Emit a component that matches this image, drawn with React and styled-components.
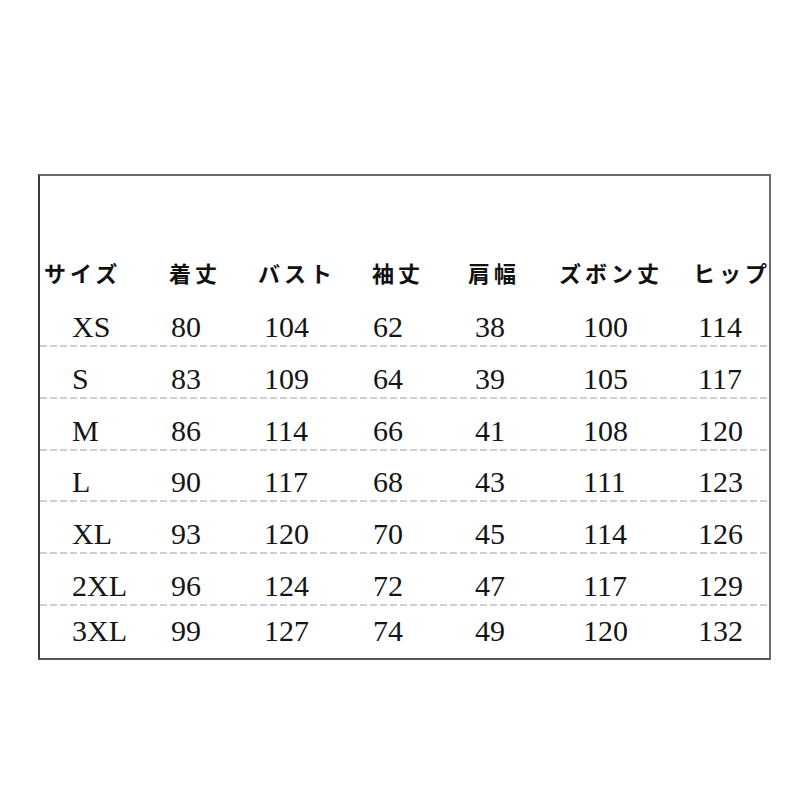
import React from "react";
import styled, { createGlobalStyle } from "styled-components";

const Global = createGlobalStyle`
  html, body { margin: 0; padding: 0; background: #fff; }
  body { width: 800px; height: 800px; overflow: hidden; }
`;

const columns = [
  { key: "size", head: "サイズ", indent: 28 },
  { key: "length", head: "着丈", indent: 2 },
  { key: "bust", head: "バスト", indent: 6 },
  { key: "sleeve", head: "袖丈", indent: 1 },
  { key: "shoulder", head: "肩幅", indent: 7 },
  { key: "pants", head: "ズボン丈", indent: 24 },
  { key: "hip", head: "ヒップ", indent: 5 },
];

const rows = [
  ["XS", 80, 104, 62, 38, 100, 114],
  ["S", 83, 109, 64, 39, 105, 117],
  ["M", 86, 114, 66, 41, 108, 120],
  ["L", 90, 117, 68, 43, 111, 123],
  ["XL", 93, 120, 70, 45, 114, 126],
  ["2XL", 96, 124, 72, 47, 117, 129],
  ["3XL", 99, 127, 74, 49, 120, 132],
];

const Page = styled.div`
  padding: 174px 0 0 38px;
`;

const Chart = styled.div`
  width: 733px;
  height: 486px;
  box-sizing: border-box;
  border: 2px solid #6a6a6a;
  border-left-color: #3a3a3a;
  border-bottom-color: #555;
  display: flex;
  flex-direction: column;
  padding-top: 85px;
`;

const gridCols = "125px 89px 114px 96px 91px 134px 1fr";

const HeaderRow = styled.div`
  display: grid;
  grid-template-columns: ${gridCols};
  padding-left: 4px;
  height: 34px;
  align-items: start;
`;

const HeadCell = styled.div`
  font-family: "Noto Sans CJK JP", "Noto Sans", sans-serif;
  font-weight: 700;
  font-size: 22px;
  line-height: 22px;
  letter-spacing: 4px;
  color: #111;
  white-space: nowrap;
`;

const DataRow = styled.div`
  display: grid;
  grid-template-columns: ${gridCols};
  padding-left: 4px;
  height: 52px;
  box-sizing: border-box;
  align-items: end;
  padding-bottom: ${(p) => (p.$last ? "12px" : "5px")};
  background-image: ${(p) =>
    p.$last
      ? "none"
      : "repeating-linear-gradient(to right, #cfcfcf 0 7px, transparent 7px 10px)"};
  background-size: 100% 2px;
  background-position: left bottom;
  background-repeat: no-repeat;
`;

const Cell = styled.div`
  font-family: "Liberation Serif", "Times New Roman", serif;
  font-size: 30px;
  line-height: 30px;
  color: #151515;
  padding-left: ${(p) => p.$indent}px;
  white-space: nowrap;
`;

export default function App() {
  return (
    <>
      <Global />
      <Page>
        <Chart>
          <HeaderRow>
            {columns.map((c) => (
              <HeadCell key={c.key}>{c.head}</HeadCell>
            ))}
          </HeaderRow>
          {rows.map((r, i) => (
            <DataRow key={r[0]} $last={i === rows.length - 1}>
              {r.map((v, j) => (
                <Cell key={columns[j].key} $indent={columns[j].indent}>
                  {v}
                </Cell>
              ))}
            </DataRow>
          ))}
        </Chart>
      </Page>
    </>
  );
}
